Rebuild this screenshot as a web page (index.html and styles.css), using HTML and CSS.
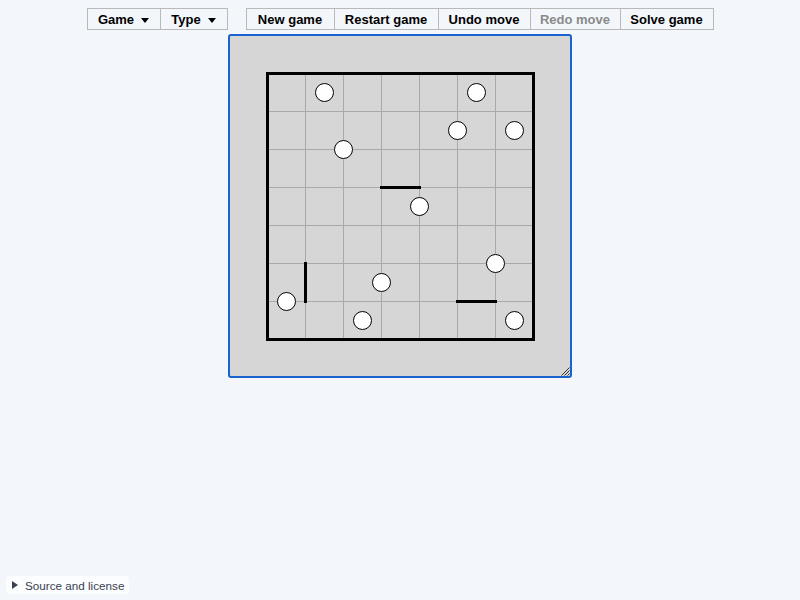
FILE: index.html
```html
<!DOCTYPE html>
<html lang="en">
<head>
<meta charset="utf-8">
<title>Galaxies</title>
<link rel="stylesheet" href="styles.css">
</head>
<body>
<main class="page">
  <div class="toolbar">
    <div class="group">
      <span class="btn w-game">Game<i class="caret"></i></span>
      <span class="btn w-type">Type<i class="caret"></i></span>
    </div>
    <div class="group">
      <span class="btn w-new">New game</span>
      <span class="btn w-restart">Restart game</span>
      <span class="btn w-undo">Undo move</span>
      <span class="btn w-redo disabled">Redo move</span>
      <span class="btn w-solve">Solve game</span>
    </div>
  </div>
  <div class="frame">
    <svg class="board" width="340" height="340" viewBox="0 0 340 340" xmlns="http://www.w3.org/2000/svg">
      <g stroke="#a9a9a9" stroke-width="1">
        <line x1="75.5" y1="37.5" x2="75.5" y2="303.5"/>
        <line x1="113.5" y1="37.5" x2="113.5" y2="303.5"/>
        <line x1="151.5" y1="37.5" x2="151.5" y2="303.5"/>
        <line x1="189.5" y1="37.5" x2="189.5" y2="303.5"/>
        <line x1="227.5" y1="37.5" x2="227.5" y2="303.5"/>
        <line x1="265.5" y1="37.5" x2="265.5" y2="303.5"/>
        <line y1="75.5" x1="37.5" y2="75.5" x2="303.5"/>
        <line y1="113.5" x1="37.5" y2="113.5" x2="303.5"/>
        <line y1="151.5" x1="37.5" y2="151.5" x2="303.5"/>
        <line y1="189.5" x1="37.5" y2="189.5" x2="303.5"/>
        <line y1="227.5" x1="37.5" y2="227.5" x2="303.5"/>
        <line y1="265.5" x1="37.5" y2="265.5" x2="303.5"/>
      </g>
      <rect x="37.5" y="37.5" width="266" height="266" fill="none" stroke="#000" stroke-width="3"/>
      <g stroke="#000" stroke-width="3" stroke-linecap="square">
        <line x1="151.5" y1="151.5" x2="189.5" y2="151.5"/>
        <line x1="75.5" y1="227.5" x2="75.5" y2="265.5"/>
        <line x1="227.5" y1="265.5" x2="265.5" y2="265.5"/>
      </g>
      <g fill="#fff" stroke="#000" stroke-width="1">
        <circle cx="94.5" cy="56.5" r="9"/>
        <circle cx="246.5" cy="56.5" r="9"/>
        <circle cx="227.5" cy="94.5" r="9"/>
        <circle cx="284.5" cy="94.5" r="9"/>
        <circle cx="113.5" cy="113.5" r="9"/>
        <circle cx="189.5" cy="170.5" r="9"/>
        <circle cx="265.5" cy="227.5" r="9"/>
        <circle cx="151.5" cy="246.5" r="9"/>
        <circle cx="56.5" cy="265.5" r="9"/>
        <circle cx="132.5" cy="284.5" r="9"/>
        <circle cx="284.5" cy="284.5" r="9"/>
      </g>
      <g stroke="#333" stroke-width="1">
        <line x1="339.5" y1="331.5" x2="331.5" y2="339.5"/>
        <line x1="339.5" y1="334.5" x2="334.5" y2="339.5"/>
        <line x1="339.5" y1="337.5" x2="337.5" y2="339.5"/>
      </g>
    </svg>
  </div>
</main>
<footer class="foot">
  <details class="source"><summary>Source and license</summary></details>
</footer>
</body>
</html>
```

FILE: styles.css
```css
* { box-sizing: border-box; }

html, body {
  margin: 0;
  padding: 0;
}

body {
  background: #f3f6fb;
  font-family: "Liberation Sans", Arial, Helvetica, sans-serif;
  color: #000;
  min-height: 100vh;
  display: flex;
  flex-direction: column;
}

.page {
  padding-top: 8px;
  display: flex;
  flex-direction: column;
  align-items: center;
}

.toolbar {
  display: flex;
  gap: 18px;
}

.group {
  display: flex;
}

.btn {
  display: flex;
  align-items: center;
  justify-content: center;
  height: 22px;
  padding: 0;
  border: 1px solid #b9b9b9;
  margin-left: -1px;
  font-size: 13px;
  font-weight: bold;
  white-space: nowrap;
}

.group .btn:first-child {
  margin-left: 0;
}

.w-game { width: 74px; }
.w-type { width: 68px; }
.w-new { width: 89px; }
.w-restart { width: 105px; }
.w-undo { width: 93px; }
.w-redo { width: 91px; }
.w-solve { width: 94px; }

.btn.disabled {
  color: #8a8a8a;
}

.caret {
  display: inline-block;
  width: 0;
  height: 0;
  margin-left: 7px;
  margin-top: 2px;
  border-left: 4.5px solid transparent;
  border-right: 4.5px solid transparent;
  border-top: 5px solid #000;
}

.frame {
  margin-top: 4px;
  width: 344px;
  height: 344px;
  border: 2px solid #1a63cc;
  border-radius: 3px;
  background: #d6d6d6;
}

.board {
  display: block;
}

.foot {
  margin-top: auto;
  padding: 0 0 6px 6px;
}

.source {
  display: inline-block;
  background: #fcfdff;
  border-radius: 4px;
  padding: 0 5px 0 6px;
  color: #3a4150;
  font-size: 11.7px;
}

.source summary {
  list-style: none;
  display: flex;
  align-items: center;
  height: 18px;
  cursor: pointer;
}

.source summary::-webkit-details-marker {
  display: none;
}

.source summary::before {
  content: "";
  display: inline-block;
  width: 0;
  height: 0;
  margin-right: 7px;
  border-top: 4px solid transparent;
  border-bottom: 4px solid transparent;
  border-left: 6px solid #3a4150;
}
```
